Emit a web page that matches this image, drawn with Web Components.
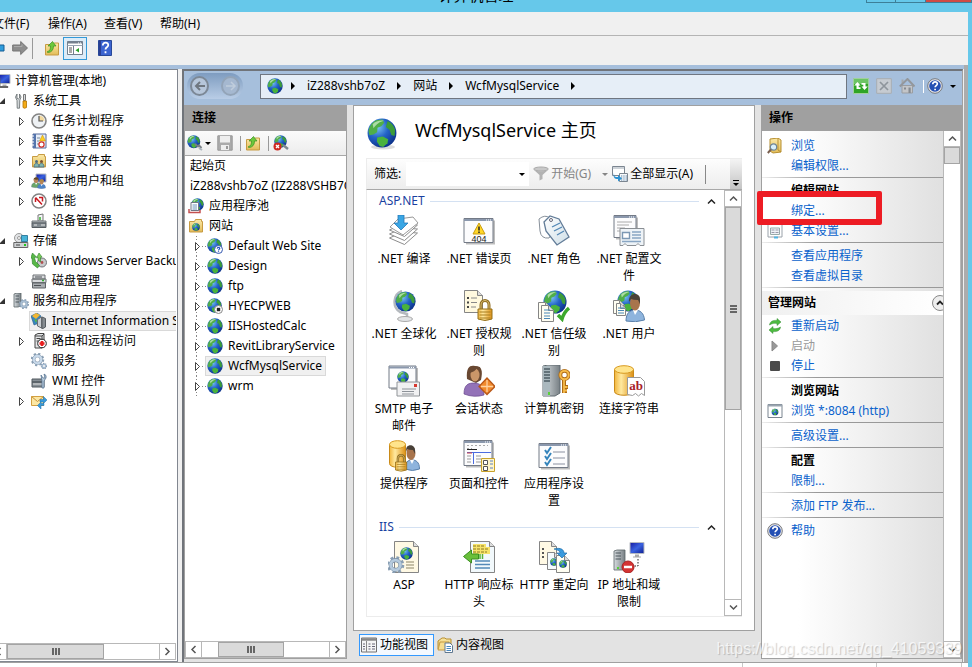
<!DOCTYPE html>
<html lang="zh-CN">
<head>
<meta charset="utf-8">
<title>计算机管理</title>
<style>
html,body{height:100%}
body{margin:0;overflow:hidden;font:12px/20px "Noto Sans","Noto Sans CJK SC",sans-serif;color:#000;background:#66c8ea}
</style>
</head>
<body>
<management-console></management-console>
<script>
const GRADS = `<defs>
<radialGradient id="gb" cx=".35" cy=".3" r=".8"><stop offset="0" stop-color="#7cc4f2"/><stop offset=".45" stop-color="#2464c8"/><stop offset="1" stop-color="#082a80"/></radialGradient>
<linearGradient id="gf" x2="0" y2="1"><stop offset="0" stop-color="#fbe9a8"/><stop offset="1" stop-color="#e2bc58"/></linearGradient>
<linearGradient id="gs" x2="1" y2="0"><stop offset="0" stop-color="#d8dde0"/><stop offset="1" stop-color="#777f84"/></linearGradient>
<linearGradient id="gy" x2="1" y2="0"><stop offset="0" stop-color="#f2b63c"/><stop offset=".35" stop-color="#ffe9a0"/><stop offset="1" stop-color="#dd9014"/></linearGradient>
<linearGradient id="gl" x2="1" y2="1"><stop offset="0" stop-color="#fff"/><stop offset="1" stop-color="#cfdfe8"/></linearGradient>
<linearGradient id="gm" x2="1" y2="1"><stop offset="0" stop-color="#1418a0"/><stop offset=".5" stop-color="#3a62e0"/><stop offset="1" stop-color="#0c1c90"/></linearGradient>
</defs>`;
const globe = (x, y, s) => `<g transform="translate(${x} ${y}) scale(${s / 16})"><circle cx="8" cy="8" r="7.7" fill="url(#gb)"/><path d="M.8 7C1.2 4.500 2.600 2.300 5 1.200L8.300.8 9.200 2.500 7.600 4.400 5.600 5.200 5.400 7.600 3.400 8.800 1.300 9.200z" fill="#4fae48"/><path d="M11 1.600c2 .8 3.400 2.600 4 4.600l-.3 3.400-1.700-.6-1-2.700-2-1.500z" fill="#3c9c3a"/><path d="M5.400 10.400l3-.6 2.900 1.500-.4 2.200-2.300 2-1.800-.6-1.500-2.200z" fill="#49b23d"/><path d="M3 3.300C4.500 1.600 7 1 9 1.400 7 1.900 5 3 3.500 5.500z" fill="#dff5d8" opacity=".65"/></g>`;
const page = (x, y, w, h, f = '#fffef2') => `<path d="M${x} ${y}h${w - 5}l5 5v${h - 5}h-${w}z" fill="${f}" stroke="#858585"/><path d="M${x + w - 5} ${y}v5h5" fill="#ddd" stroke="#858585"/>`;
const win = (x, y, w, h) => `<path d="M${x + 2} ${y + 2}h${w}v${h}h-${w}z" fill="#bdbdbd"/><path d="M${x} ${y}h${w}v${h}h-${w}z" fill="#fcfcfd" stroke="#737a86"/><path d="M${x} ${y + 1.500}h${w}" stroke="#8b98ad" stroke-width="2"/><path d="M${x + w - 7} ${y + 1.500}h6" stroke="#fff" stroke-dasharray="1 1"/>`;
const padlock = (x, y) => `<g transform="translate(${x} ${y})"><path d="M3.500 11V6c0-6 8-6 8 0v5" fill="none" stroke="#8f6c20" stroke-width="3"/><path d="M3.500 11V6c0-6 8-6 8 0v5" fill="none" stroke="#d8bc70"/><path d="M.5 10h14v10q-7 3-14 0z" fill="url(#gy)" stroke="#94701a"/><path d="M2 13h11M2 16h11M2 19h11" stroke="#a67c1e"/></g>`;
const person = (x, y, s, hair, body) => `<g transform="translate(${x} ${y}) scale(${s})"><path d="M1 20c0-7 4-9 9-9s9 2 9 9q-9 3-18 0z" fill="${body}" stroke="#5a6a8a" stroke-width=".6"/><path d="M8 11l2 5 3-5z" fill="#fff"/><ellipse cx="10" cy="6.500" rx="4.500" ry="5.500" fill="#b98558"/><path d="M5 7C4 0 15-2 15.500 5L15 8l-1-3q-5 1-8-1z" fill="${hair}"/></g>`;
const cyl = (x, y, w, h) => `<path d="M${x} ${y + 4}v${h - 8}c0 5 ${w} 5 ${w} 0v-${h - 8}z" fill="url(#gy)" stroke="#c98a18"/><ellipse cx="${x + w / 2}" cy="${y + 4}" rx="${w / 2}" ry="3.800" fill="#ffe48c" stroke="#d89a20"/>`;
const folder = `<path d="M1.500 3.500h5l1-2h6v2h1v10.500h-13z" fill="url(#gf)" stroke="#c79b42"/>`;
const helpDisc = `<circle cx="8" cy="8" r="7.300" fill="#e8e8ea" stroke="#77797e"/><circle cx="8" cy="8" r="5.800" fill="#2450b4"/><path d="M5.800 6.300c0-3.400 4.700-3 4.500-.3-.1 1.500-2.200 1.700-2.200 3.300M8.100 10.700v1.500" fill="none" stroke="#fff" stroke-width="1.700"/>`;
const server = (x, y, w, h) => `<path d="M${x} ${y + 1}l3-1h${w - 3}v${h - 1}l-3 1h-${w - 3}z" fill="url(#gs)" stroke="#5c6468" stroke-width=".8"/><path d="M${x + 1.500} ${y + 3}h${w / 2}M${x + 1.500} ${y + 6}h${w / 2}M${x + 1.500} ${y + 9}h${w / 2}" stroke="#4c565c"/>`;
const monitor = (x, y, w, h) => `<path d="M${x} ${y}h${w}v${h}h-${w}z" fill="url(#gm)" stroke="#b7bbc2"/><path d="M${x + w / 2 - 2} ${y + h + 1}h4v2h2v1h-8v-1h2z" fill="#aaa"/>`;
const gear = (cx, cy, r, f = '#a9bfd4') => `<circle cx="${cx}" cy="${cy}" r="${r}" fill="none" stroke="#8a9fb4" stroke-width="${r * .7}" stroke-dasharray="${r * .38} ${r * .405}"/><circle cx="${cx}" cy="${cy}" r="${r * .75}" fill="none" stroke="#7b90a6" stroke-width="${r * .62}"/><circle cx="${cx}" cy="${cy}" r="${r * .75}" fill="none" stroke="${f}" stroke-width="${r * .45}"/>`;

/* name: [view box size, drawing] */
const ICONS = {
  root: [16, monitor(4, 1.500, 11, 9) + server(0, 5, 5, 9) + `<path d="M5 14h8" stroke="#666" stroke-width="2"/>`],
  tools: [16, `<path d="M4 1v4l1.200 1L6.500 5V1q3 3 .3 6.200l-.3 8H4.200L4 7.500Q1 4 4 1z" fill="#d2d6d8" stroke="#62696c" stroke-width=".8"/><path d="M10.500 1.500h2v6h-2z" fill="#d8dcdf" stroke="#777"/><path d="M10 8h3.500v6.500q-2 1.500-3.500 0z" fill="#f4ac18" stroke="#b47400" stroke-width=".8"/>`],
  clock: [16, `<circle cx="8" cy="8" r="7" fill="#eef1f4" stroke="#848484" stroke-width="1.600"/><path d="M8 8h5.500A5.500 5.500 0 0 0 8 2.500z" fill="#f2d9a0"/><path d="M8 3v5h4" fill="none" stroke="#555" stroke-width="1.200"/>`],
  events: [16, `<path d="M2 1h13v14H2z" fill="#e8eef8" stroke="#586c9c"/><path d="M2 1h3v14H2z" fill="#5474ac"/><path d="M6 5h3M6 8h2M6 11h2" stroke="#789"/><path d="M11.500 2l3 6h-6z" fill="#ffcf20" stroke="#b88a00" stroke-width=".5"/><circle cx="10.500" cy="11.500" r="2.600" fill="#fff" stroke="#d03028" stroke-width="1.200"/><path d="M1 3h2M1 6h2M1 9h2M1 12h2" stroke="#fff"/>`],
  share: [16, folder + `<circle cx="5.500" cy="8.500" r="1.500" fill="#4a6a80"/><circle cx="10.500" cy="8.500" r="1.500" fill="#7a5030"/><path d="M3 14c0-5 5-5 5 0zM8 14c0-5 5-5 5 0z" fill="#7fb6ae" stroke="#578"/>`],
  users: [16, monitor(5, 1, 10, 8) + person(0, 4, .5, '#604828', '#6ba768') + person(6, 6, .45, '#b08840', '#4c84c8')],
  perf: [16, `<circle cx="8" cy="8" r="7" fill="#fff" stroke="#828282" stroke-width="1.500"/><path d="M4.500 4.500l6.500 7M4.500 9V5M8 4.500h3.500v4" fill="none" stroke="#c81820" stroke-width="1.500"/>`],
  devices: [16, `<path d="M7 2l5-1v7H7z" fill="#f4f6f8" stroke="#777"/><path d="M9 4v3" stroke="#3ab030" stroke-width="1.500"/><path d="M1 8h14v2H1z" fill="#b9bec2" stroke="#73797d"/><path d="M1 10h14v4.500H1z" fill="#828a90" stroke="#555b60"/><path d="M3 12h3M10 12h4" stroke="#e6e6e6"/>`],
  storage: [16, `<circle cx="6" cy="5" r="4.500" fill="#e2e4e6" stroke="#999"/><circle cx="6" cy="5" r="1.500" fill="#fff" stroke="#999"/><path d="M8.500 2.500h6v6h-6z" fill="#48b4d8" stroke="#3580a0"/><path d="M.8 9.500h14v5H.8z" fill="#cfd2d4" stroke="#666"/><path d="M3 12h4" stroke="#444"/><path d="M12 11v2" stroke="#20c820" stroke-width="2"/>`],
  backup: [16, `<circle cx="11" cy="9.500" r="4.500" fill="#c8cacc" stroke="#707478"/><circle cx="11" cy="9.500" r="1.400" fill="#b05050"/><path d="M1.500 0l4 4-2 .5 1 4 4 4-2 2.500-5-4L1 5-.5 5.500z" fill="#58b848" stroke="#2a8028" stroke-width=".6"/><path d="M8 0l3 4-1.500.5V9L7 7V4.500L5.500 5z" fill="#7aca58" stroke="#2a8028" stroke-width=".6"/>`],
  disk: [16, `<path d="M2 2h12v4H2zM1 6h14v3.500H1z" fill="#d8dadd" stroke="#6c7074"/><path d="M1.500 10h13v5h-13z" fill="#a8acb0" stroke="#606468"/><path d="M4 4h7M3 12.500h7" stroke="#4c5054"/><path d="M11 7.500h2" stroke="#30b030" stroke-width="1.500"/>`],
  services: [16, server(1, 0, 7, 14) + gear(11, 11, 3.800)],
  iis: [16, `<path d="M0 3l6-3 4 3-2 7-5 2z" fill="#3686c0" stroke="#285c88" stroke-width=".6"/><path d="M1 3l4-3 4 2-4 4z" fill="#f2b632"/><path d="M3 6l3 1-1 3z" fill="#58b848"/><path d="M6.500 6.500l4-2.500v11l-4-2z" fill="#caced2" stroke="#6c7074"/><path d="M11 4l3.500 1.500v8.500l-3.500 2z" fill="#868c90" stroke="#565c60"/>`],
  routing: [16, `<path d="M4 2l3-1.500h6V13l-2 2H4z" fill="#e4e6e8" stroke="#444"/><path d="M4 3h7v11M11 3l2-2M5.500 5.500h4M5.500 8h4" fill="none" stroke="#444"/><circle cx="11" cy="10.500" r="4.300" fill="#fff" stroke="#222"/><path d="M11 8v5M8.500 10.500h5" stroke="#e82020" stroke-width="2.600"/>`],
  gears: [16, gear(6.500, 6.500, 5, '#c8d9ea') + gear(13, 13, 2.400, '#a9c0d8')],
  wmi: [16, `<path d="M1 6h12v3H1zM1 9h12v5H1z" fill="#868e94" stroke="#50585e"/><path d="M2 11h9" stroke="#ddd"/><path d="M10 2l2 3h2l-1-4q3 1 2 4l-2 3v7h-2V8z" fill="#bccfdf" stroke="#567290" stroke-width=".8"/>`],
  queue: [16, `<path d="M.5 3.500h12v9H.5z" fill="#fce7a4" stroke="#d3a040"/><path d="M.5 3.500l6 5 6-5" fill="none" stroke="#c89438"/><path d="M9 6.500h3.500v-3L16 7l-3.500 3.500V9H9zM13 12.500h-3V16L6.500 12.500 10 9v1.500h3z" fill="#3a9ada" stroke="#1a70b0" stroke-width=".5"/>`],
  pool: [16, globe(3, 0, 13) + `<path d="M3 4.500h7.500v8H3z" fill="#fff" stroke="#6f7784"/><path d="M4.500 7h4.500M4.500 9h4.500M4.500 11h4.500" stroke="#6c94bc"/><path d="M1 11v3.500h11V12" fill="none" stroke="#c45050" stroke-width="1.500"/>`],
  sites: [16, folder + globe(4, 5, 8)],
  globe: [16, globe(0, 0, 16)],
  globeHelp: [16, globe(0, 0, 15) + `<circle cx="11.500" cy="11.500" r="4" fill="#fff" stroke="#3458b0"/><path d="M10.200 10.600c.2-1.800 2.700-1.500 2.500 0-.1.800-1.200.8-1.200 1.800M11.500 13.200v1" stroke="#2450c0" fill="none" stroke-width="1.200"/>`],
  globeStop: [16, globe(0, 0, 15) + `<circle cx="11.500" cy="11.500" r="4" fill="#fff" stroke="#888"/><path d="M9.800 9.800h3.400v3.400H9.800z" fill="#222"/>`],
  globeLink: [16, globe(0, 0, 13.500) + `<path d="M8 9l3 2.500 1-1 2.500 2.500" stroke="#777e84" stroke-width="2" fill="none"/><path d="M12 13l3 2" stroke="#aab4bc" stroke-width="2"/>`],
  globeDrop: [16, globe(1, 0, 13) + `<path d="M10 10l5 4" stroke="#7c8790" stroke-width="2.500"/><circle cx="4.500" cy="11.500" r="4" fill="#ce2820"/><path d="M3 10l3 3M6 10l-3 3" stroke="#fff" stroke-width="1.400"/>`],
  save: [16, `<path d="M.8.8h14.400v14.400H.8z" fill="#aaa" stroke="#999"/><path d="M3 1h10v6.500H3zM4 10h8v5H4z" fill="#eee"/><path d="M9 11h2v3H9z" fill="#999"/>`],
  folderUp: [16, `<path d="M1.500 4.500h7l2-1.500h4v12h-13z" fill="url(#gf)" stroke="#c79b42"/><path d="M3 12c3-1 3.500-3 3.500-6H4L8.500 1.500 12 6H9.500c0 4-2 6-5 6.500z" fill="#6cc83c" stroke="#3a9020" stroke-width=".7"/>`],
  back: [16, `<path d="M8 5h7v6H8v3L1 8l7-6z" fill="#2f9cdc" stroke="#155c94"/>`],
  forward: [16, `<path d="M.7 5h8V1.500L15.500 8l-6.800 6.500V11h-8z" fill="#8d8d8d" stroke="#747474"/><path d="M2 6.500h8V4.500" fill="none" stroke="#aaa"/>`],
  panes: [16, `<path d="M.5 1.500h15v13H.5z" fill="#fff" stroke="#73808f"/><path d="M.5 2.500h15" stroke="#73808f" stroke-width="2"/><path d="M.5 5.500h15" stroke="#9aa6b4"/><path d="M6.500 6v8" stroke="#73808f"/><path d="M2 8h3M2 10h3M2 12h3" stroke="#555"/><path d="M12 8v4.500L8.500 10.200z" fill="#28a028"/><path d="M11 3h4" stroke="#fff" stroke-dasharray="1 1"/>`],
  helpBook: [16, `<path d="M1.500.5h13v15h-13z" fill="#3c64d0" stroke="#284898"/><path d="M3 .5v15" stroke="#2a3f94" stroke-width="2"/><path d="M5.800 5.400c0-4 6-3.600 5.400 0-.3 2-2.700 1.900-2.700 4M8.500 11.200v2" fill="none" stroke="#fff" stroke-width="1.800"/>`],
  help: [16, helpDisc],
  refreshGo: [16, `<path d="M.5.5h15v15H.5z" fill="#2fa526" stroke="#a0cf9c"/><path d="M1 1h14v5H1z" fill="#6cc464"/><path d="M1.200 7.500L4.500 4l3 3.500H5.700v1.800h1.800v1.700H3.500V7.500zM14.800 8.500l-3.300 3.500-3-3.500h1.800V6.700H8.500V5h4v3.500z" fill="#fff"/>`],
  stopGray: [16, `<path d="M.7.700h14.600v14.600H.7z" fill="#c6cbd1" stroke="#a8adb2"/><path d="M4 4l8 8M12 4l-8 8" stroke="#8e959c" stroke-width="1.700"/>`],
  home: [16, `<path d="M2.500 1.500h2v4h-2z" fill="#a5a8ac"/><path d="M3 7.500h10.500V15H3z" fill="#c3c5c8" stroke="#9a9da1"/><path d="M.8 8.500L8.500 1l7 7.500" fill="none" stroke="#93979c" stroke-width="2"/><path d="M5 9.500h2v2H5zM9.500 9.500h2.200V15H9.500z" fill="#858a90"/>`],
  funnel: [16, `<ellipse cx="8" cy="3" rx="7.300" ry="2" fill="#c8c8c8" stroke="#aaa"/><path d="M1 4l5.500 5v5.500l3-1.500V9L15 4q-7 2.500-14 0z" fill="#b2b2b2"/>`],
  showAll: [16, `<path d="M.5.500h12v9H.5z" fill="#fff" stroke="#7b8590"/><path d="M.5 2h12" stroke="#9aa5b0"/><path d="M7.500 7.500h8v8h-8z" fill="#f6f8fa" stroke="#7b8590"/><path d="M9 10h6M9 12h6M9 14h6" stroke="#5d84a8" stroke-dasharray="1.300 1"/><path d="M2 7c0 4 1 4 4 4V9l4 3.500-4 3V13c-4 0-5-2-4-6z" fill="#2b92d4"/>`],
  browseFolder: [16, `<path d="M3 1l8-1 3 2v12l-8 1-3-2z" fill="url(#gf)" stroke="#b78f30"/><path d="M11 0v12l3 2" fill="none" stroke="#b78f30"/><circle cx="6.500" cy="9" r="3.200" fill="#d8effa" stroke="#6e8494" stroke-width="1.200"/><path d="M4 11.500L.8 15" stroke="#7a6050" stroke-width="2"/>`],
  settings: [16, `<path d="M1 1h14v13H1z" fill="#fff" stroke="#9aa2aa"/><path d="M3.500 5h9v6.500h-9z" fill="#eef2f6" stroke="#9aa"/><path d="M4.500 7h3M8.500 7h3M4.500 9.500h3M8.500 9.500h3" stroke="#99a"/><path d="M7 14.500h4" stroke="#50b4e4" stroke-width="2"/>`],
  restart: [16, `<path d="M2.500 7c.5-4 4-5 7.500-4.500V.5L14 4l-4 3.500v-2C7 5 5 5.500 2.500 7zM13.500 9c-.5 4-4 5-7.500 4.500v2L2 12l4-3.500v2c3 .5 5 0 7.500-1.500z" fill="#4dbb40" stroke="#348c30" stroke-width=".5"/>`],
  play: [16, `<path d="M5 3v10l5.500-5z" fill="#999" stroke="#888"/>`],
  stop: [16, `<rect x="3" y="3" width="10" height="10" rx="1" fill="#4a4a4a"/>`],
  browseSite: [16, `<path d="M1 1.500h14v13H1z" fill="#fff" stroke="#7b8590"/><path d="M1 2.500h14" stroke="#9aa5b0" stroke-width="2"/>` + globe(4.500, 5.500, 7)],
  featureView: [16, `<path d="M.5 1h15v14H.5z" fill="#f5f5f5" stroke="#707070"/><path d="M.5 2.500h15" stroke="#888" stroke-width="2.500"/><path d="M5.500 4v11" stroke="#888"/><path d="M2 7h2M2 9.500h2M2 12h2M7.500 7h2M7.500 9.500h2M7.500 12h2M11 7h3M11 9.500h3M11 12h3" stroke="#667"/>`],
  contentView: [16, `<path d="M1 4l4-3h3l1 1h5v10H1z" fill="url(#gf)" stroke="#b78f30"/><path d="M3 5h9l-2 8H1z" fill="#f7dd90" stroke="#c79b42"/><path d="M8 6h5l2.500 2.500V15.500H8z" fill="#fff" stroke="#607890"/><path d="M9.500 9.500H14M9.500 11.500H14M9.500 13.500H14" stroke="#4888c0"/>`],

  globeBig: [32, `<ellipse cx="17" cy="29" rx="12" ry="2.500" fill="#ddd"/>` + globe(1, 0, 30)],
  compile: [32, [23, 19, 15].map(y => `<path d="M1.500 ${y}l13-6 15 1-13 11.500z" fill="#fff" stroke="#8c8c8c"/>`).join('') + `<path d="M2 12l8-8 15-2 5 6-15 12z" fill="#fff" stroke="#999"/><path d="M10 0h6v8h4l-7 7-7-7h4z" fill="#3aa6e4" stroke="#2678b8" stroke-width=".8"/>`],
  err404: [32, win(1, 3.500, 29, 24) + `<path d="M16 8l6 11H10z" fill="#ffd728" stroke="#c99b10"/><path d="M16 11.500v4M16 16.500v1.500" stroke="#222" stroke-width="1.500"/><text x="16" y="26.500" font-family="Liberation Sans,sans-serif" font-size="9" text-anchor="middle" fill="#222">404</text>`],
  tags: [32, `<path d="M1 4q6-5 11-1l5 11-6 9q-8 1-9-7z" fill="#fff" stroke="#87909a"/><path d="M6 7l6-6 9 3 10 18-12 8L8 16z" fill="url(#gl)" stroke="#627c98" stroke-width="1.300"/><circle cx="13" cy="5" r="1.500" fill="#fff" stroke="#667"/><path d="M14 12l8-4M16 16l8-4M19 20l7-4" stroke="#5287b5" stroke-width="1.300"/>`],
  config: [32, win(1, .5, 22, 22) + `<path d="M4 7h15M4 10h12M4 13h8M4 16h6" stroke="#aaa"/><path d="M7 13.500h24v17h-4l-2-2-2 2h-9l-2-2-2 2H7z" fill="#eef3f7" stroke="#8a8f94"/><path d="M9.500 17.500h7v6h-7z" fill="#fff" stroke="#7c98b4" stroke-width="1.400"/><path d="M19 17h9M19 20h9M19 23h9M9 26.500h19" stroke="#89a6c4" stroke-width="1.300"/>`],
  worldStand: [32, `<path d="M14 1C5 4 4 17 12 22l7 2v4" fill="none" stroke="#b4b9be" stroke-width="2.500"/><ellipse cx="17" cy="29" rx="7.500" ry="2.500" fill="#e2e4e6" stroke="#aaa"/>` + globe(7, 1, 21)],
  authorize: [32, page(1.500, .5, 18, 22, '#fff9df') + `<path d="M4 8h2M4 12.500h2M4 17h2" stroke="#444" stroke-width="2"/><path d="M8 8h6M8 12.500h6M8 17h5" stroke="#888"/>` + padlock(14.500, 9)],
  trust: [32, globe(5, 0, 24) + page(.5, 12.500, 12, 16) + page(3.500, 15.500, 12, 16) + `<path d="M6 20h6M6 23h6M6 26h6M6 28.500h6" stroke="#4888b8"/><path d="M20 25l4 4q2-7 7-11" fill="none" stroke="#3ca82c" stroke-width="3.500"/>`],
  netUsers: [32, globe(4, 0, 22) + page(.5, 10.500, 11, 13) + page(3.500, 13.500, 9, 12) + `<path d="M5 18h6M5 20.500h6M5 23h6" stroke="#4888b8"/><path d="M13 31c0-8 4-11 9-11s9 3 9.500 10q-9 3-18.500 1z" fill="#8eb4dd" stroke="#5a80aa"/><path d="M20 20l2 5 3-5z" fill="#fff"/><ellipse cx="22" cy="13" rx="5" ry="7.500" fill="#a8744c"/><path d="M16 12C15 2 27 2 27 9v5l-2-4q-5 0-7-1z" fill="#4a4238"/>`],
  smtp: [32, win(1, 1, 27, 22) + globe(9, 6, 12) + `<path d="M9 17h22.500v14H9z" fill="#f1f1f2" stroke="#909498"/><path d="M14 24h14M14 26.500h12M14 29h12" stroke="#8d9298"/><path d="M26 19h3v3h-3z" fill="#d63830"/>`],
  session: [32, `<path d="M4 14C3 2 7 0 12 1c7 0 8 5 6 14l-5 3z" fill="#694832"/><path d="M1 29c0-10 5-11 10-11s10 2 10 12q-10 3-20-1z" fill="#9372b8" stroke="#68488c" stroke-width=".7"/><ellipse cx="12" cy="10" rx="4.500" ry="6.500" fill="#cb9669"/><path d="M6 8q6-1 8-5l4 5-1-6-7-1-4 3z" fill="#694832"/><path d="M24 13l8 8.500-8 8-8-8z" fill="#f18a2c" stroke="#b85818" stroke-width="1.300"/><path d="M24 15v12M18 21.500h12" stroke="#ffd2a0" stroke-width="1.300"/>`],
  machineKey: [32, `<path d="M5 1l5-1h12v28l-5 3H5z" fill="url(#gs)" stroke="#616b70"/><path d="M5 1h7v30H5z" fill="#aab8be"/><path d="M6 4h6M6 7h6M6 10h6M6 13h6M6 16h6" stroke="#4d5c64" stroke-width="1.500"/><path d="M11 27v3" stroke="#58d038" stroke-width="2"/><path d="M26 14v14M26 22h4M26 26h3" stroke="#ae6b16" stroke-width="4"/><circle cx="26.500" cy="10" r="4.200" fill="none" stroke="#b06e1a" stroke-width="3.800"/><circle cx="26.500" cy="10" r="4.200" fill="none" stroke="#f6bb4a" stroke-width="2"/><path d="M26 14v14M26 22h3.500M26 25.500h3" stroke="#f6bb4a" stroke-width="1.800"/>`],
  connStr: [32, cyl(1.500, .5, 19, 30) + `<path d="M14.500 12.500h13l4 4v14l-3-2-3 2.500-3-2.500-3 2-5-1z" fill="#fff" stroke="#999"/><text x="23" y="25" font-family="Liberation Serif,serif" font-weight="bold" font-size="13" text-anchor="middle" fill="#a82028">ab</text>`],
  provider: [32, cyl(1.500, .5, 16, 27) + `<path d="M17 29c0-7 3-9 7-9s7.500 2 7.500 9q-7 3-14.500 0z" fill="#8eb4dd" stroke="#5a80aa"/><path d="M22 20l2 4 2-4z" fill="#fff"/><ellipse cx="23" cy="13" rx="4.500" ry="7" fill="#a8744c"/><path d="M18 12c-1-9 9-8 9-2v4l-2-4q-4 0-6-1z" fill="#484038"/><g transform="translate(1.500 6) scale(.8)">` + padlock(7, 10) + `</g>`],
  controls: [32, win(1, .5, 28, 25) + `<path d="M4 5.500h21M4 8.500h5" stroke="#aaa" stroke-dasharray="2 2"/><path d="M4 9.500h10" stroke="#222"/><path d="M4 12.500h24M10.500 12v12" stroke="#4c6ce0"/><path d="M4 13h5" stroke="#d04040"/><path d="M4 16h4M4 19h4M4 22h4M13 16h5M13 19h5M13 22h5" stroke="#999"/><path d="M18.500 18.500h13v13h-13z" fill="#fff5c8" stroke="#c8a22c"/><path d="M20.500 20.500h4v4h-4zM20.500 26.500h4v4h-4z" fill="#fff" stroke="#555"/><path d="M27 21h3M27 24h3M27 28h3" stroke="#5a80c8"/>`],
  appSettings: [32, win(1, 3.500, 29, 24) + `<path d="M15 12h12M15 18h12M15 24h12" stroke="#8a90a0"/><path d="M7 10l2 3 4-6M7 16l2 3 4-6M7 22l2 3 4-6" fill="none" stroke="#3484bc" stroke-width="2"/>`],
  asp: [32, page(6.500, .5, 24, 31, '#fff9e4') + globe(12, 6, 13) + `<path d="M18 21h8M18 24h8M18 27h8" stroke="#8d8567"/>` + gear(7.500, 24, 6.500, '#b5cadd')],
  headers: [32, page(7.500, .5, 24, 31, '#f2f9fc') + `<path d="M10 3h13v3h4v7H10z" fill="#f7e36a"/><path d="M10 5h12M10 8h16M10 11h14" stroke="#8c7a20" stroke-dasharray="3 1"/><path d="M.5 15.500l8-6.500v4h7v5h-7v4z" fill="#69bf3a" stroke="#3a8f20"/><path d="M17 13v5M19.500 13v5" stroke="#5bb338" stroke-width="1.500"/><path d="M12 20h15M12 23.500h15M12 27h15" stroke="#548ab8" stroke-width="1.500"/>`],
  redirect: [32, page(1.500, .5, 17, 23, '#fff9e4') + `<path d="M4 8h2M4 12h2M4 16h2" stroke="#555" stroke-width="2"/>` + page(9.500, 11.500, 12, 17, '#f5fafc') + globe(12, 17, 8) + page(18.500, 14.500, 13, 17) + globe(21, 19, 8) + `<path d="M16 8c7-2 10 1 10 4h3l-5 5-5-5h3c0-2-2-3-6-4z" fill="#3a9ade" stroke="#226ea8" stroke-width=".7"/>`],
  ipLimit: [32, server(1, 9, 11, 20) + `<path d="M5 26v2" stroke="#58d038" stroke-width="2"/>` + monitor(17, 1.500, 14, 11) + `<path d="M25 18v7h-5" fill="none" stroke="#222" stroke-dasharray="1.500 1.500"/><circle cx="15" cy="26" r="6" fill="#d43434" stroke="#a22"/><path d="M11 26h8" stroke="#fff" stroke-width="2.500"/>`],
  peekBlue: [32, `<rect x="8" width="16" height="14" rx="2" fill="#a3b5c4"/>`],
  peekPage: [32, page(1.500, .5, 15, 20)],
  peekLock: [32, `<rect x="8" width="8" height="9" fill="#9a7828"/>`]
};

function define(name, html, setup) {
  const t = document.createElement('template');
  t.innerHTML = html;
  customElements.define(name, class extends HTMLElement {
    connectedCallback() {
      if (this.shadowRoot) return;
      this.attachShadow({mode: 'open'}).append(t.content.cloneNode(true));
      if (setup) setup(this, this.shadowRoot);
    }
  });
}

define('ui-icon', `<style>:host{display:block;flex:none;width:16px;height:16px}:host([large]){width:32px;height:32px}svg{display:block;width:100%;height:100%}</style>`, (el, root) => {
  const [size, art] = ICONS[el.getAttribute('name')];
  root.innerHTML += `<svg viewBox="0 0 ${size} ${size}" aria-hidden="true">${GRADS}${art}</svg>`;
});

define('scroll-bar', `<style>
:host{display:flex;flex:none;box-sizing:border-box;height:17px;background:#fff;border:1px solid #b8b8b8}
:host([vertical]){flex-direction:column;height:auto;width:18px}
button{flex:none;width:16px;height:100%;padding:0;border:0;border-right:1px solid #b8b8b8;background:#fff;display:grid;place-items:center}
button.end{border-right:0;border-left:1px solid #b8b8b8}
:host([vertical]) button{width:100%;height:16px;border:0;border-bottom:1px solid #b8b8b8}
:host([vertical]) button.end{border:0;border-top:1px solid #b8b8b8}
.track{flex:1;display:flex;min-width:0;min-height:0;padding-left:var(--lead,0)}
:host([vertical]) .track{flex-direction:column;padding:var(--lead,0) 0 0}
.thumb{flex:none;width:var(--size);background:#dadada;outline:1px solid #a4a4a4;outline-offset:-1px;display:grid;place-items:center}
:host([vertical]) .thumb{width:auto;height:var(--size)}
.grip{width:8px;height:7px;background:repeating-linear-gradient(90deg,#666 0 2px,transparent 2px 3px)}
:host([vertical]) .grip{width:7px;height:8px;background:repeating-linear-gradient(#666 0 2px,transparent 2px 3px)}
:host([plain]) .grip{display:none}
svg{display:block;width:9px;height:9px}
:host([vertical]) svg{transform:rotate(90deg)}
</style>
<button aria-label="向前滚动"><svg viewBox="0 0 9 9"><path d="M6.500 1L3 4.500 6.500 8" fill="none" stroke="#555" stroke-width="1.500"/></svg></button>
<div class="track"><div class="thumb"><div class="grip"></div></div></div>
<button class="end" aria-label="向后滚动"><svg viewBox="0 0 9 9"><path d="M2.500 1L6 4.500 2.500 8" fill="none" stroke="#555" stroke-width="1.500"/></svg></button>`);

define('tree-node', `<style>
:host{display:flex;height:20px;align-items:center;white-space:nowrap;margin-left:var(--indent,0)}
.exp{flex:none;width:16px;height:20px}
.exp svg{display:block}
.hit{display:flex;align-items:center;gap:var(--gap,4px);box-sizing:border-box;height:20px;padding:0 3px 0 1px;margin-left:-2px;border:1px solid transparent}
:host([selected]) .hit{background:#f0f0f0;border-color:#d9d9d9}
:host([fill]) .hit{flex:1}
</style><div class="exp"></div><div class="hit"><slot></slot></div>`, (el, root) => {
  el.setAttribute('role', 'treeitem');
  const exp = root.querySelector('.exp'), kind = el.getAttribute('expander');
  if (kind === null) exp.remove();
  if (kind === 'closed' || kind === 'site') exp.innerHTML = `<svg width="16" height="20"><path d="M4.500 6.500v8l4-4z" fill="#fff" stroke="#444"/>${kind === 'site' ? '<path d="M5.500 0v6M5.500 16v4M11 10.500h4" stroke="#888" stroke-dasharray="1 2"/>' : ''}</svg>`;
  if (kind === 'open') exp.innerHTML = `<svg width="16" height="20"><path d="M8 7v6H2z" fill="#333"/></svg>`;
  const name = el.getAttribute('icon');
  if (name) { const i = document.createElement('ui-icon'); i.setAttribute('name', name); root.querySelector('.hit').prepend(i); }
});

define('title-bar', `<style>:host{display:flex;justify-content:center;height:12px;background:#66c8ea;position:relative;overflow:hidden}
h1{margin:-17px 0 0;padding-right:20px;font-size:15px;line-height:24px;font-weight:400;height:24px}
.caps{position:absolute;right:0;top:-18px;display:flex}
button{width:30px;height:21px;padding:0;border:1px solid #3d7f98;background:transparent}
button+button{border-left:0}button.close{width:46px;background:#cf4b46}
</style><h1>计算机管理</h1><div class="caps"><button aria-label="最小化"></button><button aria-label="最大化"></button><button class="close" aria-label="关闭"></button></div>`);

define('menu-bar', `<style>:host{display:flex;gap:16px;height:23px;background:#f0f0f0;border-bottom:1px solid #b4b4b4;overflow:hidden}
button{flex:none;font:inherit;color:inherit;line-height:22px;min-width:40px;margin:0;padding:0;border:0;background:none;white-space:nowrap;text-align:left}
button:first-of-type{margin-left:-8px}
</style><button>文件(F)</button><button>操作(A)</button><button>查看(V)</button><button>帮助(H)</button>`);

define('tool-bar', `<style>:host{display:flex;height:29px;background:#f0f0f0;overflow:hidden}
.row{display:flex;height:24px;align-items:center}
button{display:grid;place-items:center;box-sizing:border-box;width:23px;height:23px;padding:0;border:1px solid transparent;background:none}
button[aria-pressed=true]{border-color:#3399d8;background:#dcecf8;width:24px}
.back{margin-left:-15px}.sep{width:1px;height:21px;background:#999;margin:0 7px 0 1px}.help{margin-left:6px}
</style><div class="row"><button class="back" aria-label="后退"><ui-icon name="back"></ui-icon></button><button aria-label="前进"><ui-icon name="forward"></ui-icon></button><span class="sep"></span><button aria-label="上移"><ui-icon name="folderUp"></ui-icon></button><button aria-label="显示窗格" aria-pressed="true"><ui-icon name="panes"></ui-icon></button><button class="help" aria-label="帮助"><ui-icon name="helpBook"></ui-icon></button></div>`);

define('console-tree', `<style>:host{display:flex;flex-direction:column;min-width:0;overflow:hidden;box-sizing:border-box;background:#fff;border-top:1px solid #828790;border-right:1px solid #828790;border-bottom:1px solid #828790}
.tree{flex:1;overflow:hidden;padding-top:1px;margin-right:1px}
.l0{--indent:-5px}.l1{--indent:-3px}.l2{--indent:15px;--gap:5px}
scroll-bar{margin:0 1px 1px -10px;--size:97px}
</style><div class="tree" role="tree" aria-label="计算机管理">
<tree-node class="l0" icon="root">计算机管理(本地)</tree-node>
<tree-node class="l1" expander="open" icon="tools">系统工具</tree-node>
<tree-node class="l2" expander="closed" icon="clock">任务计划程序</tree-node>
<tree-node class="l2" expander="closed" icon="events">事件查看器</tree-node>
<tree-node class="l2" expander="closed" icon="share">共享文件夹</tree-node>
<tree-node class="l2" expander="closed" icon="users">本地用户和组</tree-node>
<tree-node class="l2" expander="closed" icon="perf">性能</tree-node>
<tree-node class="l2" expander="none" icon="devices">设备管理器</tree-node>
<tree-node class="l1" expander="open" icon="storage">存储</tree-node>
<tree-node class="l2" expander="closed" icon="backup">Windows Server Backup</tree-node>
<tree-node class="l2" expander="none" icon="disk">磁盘管理</tree-node>
<tree-node class="l1" expander="open" icon="services">服务和应用程序</tree-node>
<tree-node class="l2" expander="none" icon="iis" selected fill>Internet Information Services</tree-node>
<tree-node class="l2" expander="closed" icon="routing">路由和远程访问</tree-node>
<tree-node class="l2" expander="none" icon="gears">服务</tree-node>
<tree-node class="l2" expander="none" icon="wmi">WMI 控件</tree-node>
<tree-node class="l2" expander="closed" icon="queue">消息队列</tree-node>
</div><scroll-bar></scroll-bar>`);

define('address-bar', `<style>:host{display:flex;align-items:center;height:34px;background:#a6bfdc;box-sizing:border-box;padding:0 6px 4px 3px}
.nav{display:flex;gap:12px;align-items:center;box-sizing:border-box;width:56px;height:26px;padding:0 3px;border-radius:13px;background:linear-gradient(#7e9cc0,#b9cde6);margin-right:17px}
.nav button{width:20px;height:20px;box-sizing:border-box;border:2px solid #7c8896;border-radius:50%;padding:0;background:#b6c6da;display:grid;place-items:center;color:#6f7780}
.nav button+button{border-color:#93a4b8;color:#c0cddc;background:#a5b8d0}
nav{flex:1;display:flex;align-items:center;gap:12px;height:23px;padding:0 6px;border:1px solid #6f7681;background:#e6eef7;min-width:0}
nav ui-icon{margin-right:-4px}
nav button,.cmds button{font:inherit;color:inherit;border:0;background:none;padding:0;display:flex;align-items:center}
i{flex:none;width:0;height:0;border:4px solid transparent;border-left-color:#000;border-right:0}
.cmds{display:flex;align-items:center;gap:7px;margin-left:6px}
.sep{width:1px;height:13px;background:#fff;margin-left:1px}
b{width:0;height:0;border:3px solid transparent;border-top-color:#000;border-bottom:0;margin-left:7px}
.sep+button{margin-left:-4px}
</style><div class="nav"><button aria-label="后退" disabled><svg width="12" height="12"><path d="M11 6H2M6 2L2 6l4 4" fill="none" stroke="currentColor" stroke-width="2"/></svg></button><button aria-label="前进" disabled><svg width="12" height="12"><path d="M1 6h9M6 2l4 4-4 4" fill="none" stroke="currentColor" stroke-width="1.500"/></svg></button></div>
<nav aria-label="路径"><ui-icon name="globe"></ui-icon><i></i><button>iZ288vshb7oZ</button><i></i><button>网站</button><i></i><button>WcfMysqlService</button><i></i></nav>
<div class="cmds"><button aria-label="刷新"><ui-icon name="refreshGo"></ui-icon></button><button aria-label="停止" disabled><ui-icon name="stopGray"></ui-icon></button><button aria-label="主页"><ui-icon name="home"></ui-icon></button><span class="sep"></span><button aria-label="帮助"><ui-icon name="help"></ui-icon><b></b></button></div>`);

define('panel-header', `<style>:host{display:block;background:#a0a0a0;height:26px;line-height:26px;padding-left:7px;font-weight:700}</style><slot></slot>`);

define('connections-panel', `<style>:host{display:flex;flex-direction:column;min-width:0;overflow:hidden;background:#fff;border:1px solid #a0a0a0;border-top:0;margin-bottom:3px}
.bar{display:flex;align-items:center;height:24px;padding:0 2px;background:linear-gradient(#fbfbfb,#ececec);border-bottom:1px solid #a8a8a8}
button{border:0;background:none;padding:0;display:flex;align-items:center}
i{border:3px solid transparent;border-top-color:#000;border-bottom:0;margin:0 6px 0 2px}
.sep{width:1px;height:15px;background:#999;margin:0 4px 0 7px}
.tree{flex:1;overflow:hidden}
.home{--indent:5px}.l1{--indent:3px;--gap:5px}.l2{--indent:6px;--gap:5px}
scroll-bar{--lead:16px;--size:66px}
</style><panel-header>连接</panel-header>
<div class="bar"><button aria-label="连接"><ui-icon name="globeLink"></ui-icon><i></i></button><button aria-label="保存" disabled><ui-icon name="save"></ui-icon></button><span class="sep"></span><button aria-label="上移"><ui-icon name="folderUp"></ui-icon></button><span class="sep"></span><button aria-label="断开"><ui-icon name="globeDrop"></ui-icon></button></div>
<div class="tree" role="tree" aria-label="连接">
<tree-node class="home">起始页</tree-node>
<tree-node class="home">iZ288vshb7oZ (IZ288VSHB7OZ)</tree-node>
<tree-node class="l1" icon="pool">应用程序池</tree-node>
<tree-node class="l1" icon="sites">网站</tree-node>
<tree-node class="l2" expander="site" icon="globeHelp">Default Web Site</tree-node>
<tree-node class="l2" expander="site" icon="globe">Design</tree-node>
<tree-node class="l2" expander="site" icon="globe">ftp</tree-node>
<tree-node class="l2" expander="site" icon="globeStop">HYECPWEB</tree-node>
<tree-node class="l2" expander="site" icon="globe">IISHostedCalc</tree-node>
<tree-node class="l2" expander="site" icon="globe">RevitLibraryService</tree-node>
<tree-node class="l2" expander="site" icon="globe" selected>WcfMysqlService</tree-node>
<tree-node class="l2" expander="site" icon="globe">wrm</tree-node>
</div><scroll-bar></scroll-bar>`);

define('feature-group', `<style>:host{display:block}
header{display:flex;align-items:center;height:20px;padding:1px 8px 0 12px;gap:5px}
h3{margin:0;font-size:12px;font-weight:400;color:#1a3fa0}
.line{flex:1;height:1px;background:#d4e1f2}
button{padding:0;border:0;background:none;margin-left:3px;display:flex}
.grid{display:grid;grid-template-columns:repeat(auto-fill,75px);padding:4px 40px 1px 0}
</style><header><h3></h3><div class="line"></div><button aria-label="折叠"><svg width="9" height="9"><path d="M1 6.500L4.500 3 8 6.500" fill="none" stroke="#222" stroke-width="1.500"/></svg></button></header><div class="grid"><slot></slot></div>`, (el, root) => {
  root.querySelector('h3').textContent = el.getAttribute('heading');
});

define('feature-tile', `<style>:host{display:flex;flex-direction:column;align-items:center;gap:3px;height:75px;padding-right:1px}
.label{width:70px;line-height:17px;text-align:center}</style><div class="art"></div><div class="label"><slot></slot></div>`, (el, root) => {
  const i = document.createElement('ui-icon');
  i.setAttribute('name', el.getAttribute('icon')); i.setAttribute('large', '');
  root.querySelector('.art').append(i);
});

define('filter-bar', `<style>:host{display:flex;align-items:center;height:30px;background:linear-gradient(#fdfdfd,#ededed);border-top:1px solid #ececec;border-bottom:1px solid #a8a8a8;border-left:1px solid #ececec}
label{padding:0 5px 0 7px}
.combo{flex:1;display:flex;align-items:center;background:#fff;height:24px;min-width:40px}
input{flex:1;min-width:0;width:20px;border:0;background:none;font:inherit;outline:0}
button{display:flex;align-items:center;gap:2px;font:inherit;color:inherit;border:0;background:none;padding:0;white-space:nowrap}
i{border:3px solid transparent;border-top-color:currentColor;border-bottom:0;margin:0 4px 0 3px}
.go{color:#858585;margin-left:4px}.go i{margin:0 4px 0 9px}
.sep{width:1px;height:19px;background:#888;margin:0 24px 0 12px}
.more{align-self:stretch;width:12px;background:linear-gradient(#f4f4f4,#c4c4c4);align-items:flex-end;justify-content:center;padding-bottom:2px}
</style><label for="q">筛选:</label><div class="combo"><input id="q"><button aria-label="展开筛选"><i></i></button></div>
<button class="go" disabled><ui-icon name="funnel"></ui-icon>开始(G)<i></i></button><button><ui-icon name="showAll"></ui-icon>全部显示(A)</button><span class="sep"></span><button class="more" aria-label="更多"><svg width="8" height="8"><path d="M1 1.500h6" stroke="#000"/><path d="M1 4h6L4 7z"/></svg></button>`);

define('feature-panel', `<style>:host{display:flex;flex-direction:column;min-width:0;min-height:0}
main{flex:1;display:flex;flex-direction:column;min-height:0;background:#fff;border:1px solid #a0a0a0;padding:0 12px 13px}
.title{display:flex;gap:17px;height:52px}
.title ui-icon{margin-top:12px}
h2{margin:0;font-size:18px;font-weight:400;line-height:49px;white-space:nowrap}
.list{flex:1;display:flex;min-height:0;border-left:1px solid #ececec;border-bottom:1px solid #ececec}
.scroll{flex:1;overflow:hidden;min-width:0}
scroll-bar{--size:203px}
.tabs{display:flex;gap:1px;padding:3px 6px 6px}
.tabs button{font:inherit;color:inherit;display:flex;align-items:center;gap:3px;height:22px;padding:0 5px 0 1px;border:1px solid transparent;background:none}
.tabs button[aria-selected=true]{border-color:#3399ff;background:#f4f9ff}
</style><main><div class="title"><ui-icon name="globeBig" large></ui-icon><h2>WcfMysqlService 主页</h2></div><filter-bar></filter-bar>
<div class="list"><div class="scroll">
<feature-group heading="ASP.NET">
<feature-tile icon="compile">.NET 编译</feature-tile><feature-tile icon="err404">.NET 错误页</feature-tile><feature-tile icon="tags">.NET 角色</feature-tile><feature-tile icon="config">.NET 配置文件</feature-tile>
<feature-tile icon="worldStand">.NET 全球化</feature-tile><feature-tile icon="authorize">.NET 授权规则</feature-tile><feature-tile icon="trust">.NET 信任级别</feature-tile><feature-tile icon="netUsers">.NET 用户</feature-tile>
<feature-tile icon="smtp">SMTP 电子邮件</feature-tile><feature-tile icon="session">会话状态</feature-tile><feature-tile icon="machineKey">计算机密钥</feature-tile><feature-tile icon="connStr">连接字符串</feature-tile>
<feature-tile icon="provider">提供程序</feature-tile><feature-tile icon="controls">页面和控件</feature-tile><feature-tile icon="appSettings">应用程序设置</feature-tile>
</feature-group>
<feature-group heading="IIS">
<feature-tile icon="asp">ASP</feature-tile><feature-tile icon="headers">HTTP 响应标头</feature-tile><feature-tile icon="redirect">HTTP 重定向</feature-tile><feature-tile icon="ipLimit">IP 地址和域限制</feature-tile>
<feature-tile icon="peekBlue"></feature-tile><feature-tile icon="peekPage"></feature-tile><feature-tile icon="peekLock"></feature-tile>
</feature-group></div><scroll-bar vertical></scroll-bar></div></main>
<div class="tabs" role="tablist"><button role="tab" aria-selected="true"><ui-icon name="featureView"></ui-icon>功能视图</button><button role="tab" aria-selected="false"><ui-icon name="contentView"></ui-icon>内容视图</button></div>`);

define('action-link', `<style>:host{display:flex;height:20px;align-items:center;padding-left:5px}
.slot{width:16px;margin-right:8px}a,button{color:#0a62cc;text-decoration:none;white-space:nowrap}
button{font:inherit;border:0;padding:0;background:none;color:#999}
</style><span class="slot"></span>`, (el, root) => {
  const name = el.getAttribute('icon');
  if (name) root.querySelector('.slot').innerHTML = `<ui-icon name="${name}"></ui-icon>`;
  const c = document.createElement(el.hasAttribute('disabled') ? 'button' : 'a');
  if (c.tagName === 'A') c.href = '#'; else c.disabled = true;
  c.append(document.createElement('slot'));
  root.append(c);
});

define('actions-panel', `<style>:host{display:flex;flex-direction:column;min-width:0;min-height:0;border:1px solid #a0a0a0;border-top:0;margin-bottom:3px;position:relative}
.body{flex:1;display:flex;min-height:0}
.list{flex:1;overflow:hidden;padding-top:5px;background:linear-gradient(90deg,#fff 20%,#e0e0e0)}
h4{margin:0;font-size:12px;height:20px;padding-left:29px}
hr{border:0;height:1px;margin:1px 0 3px;background:linear-gradient(90deg,#eee,#999 30%)}
.section{display:flex;justify-content:space-between;align-items:center;height:24px;margin-bottom:1px;padding-left:6px;background:linear-gradient(90deg,#f0f0f0,#fff);font-weight:700}
.section button{flex:none;width:16px;height:16px;box-sizing:border-box;padding:0;border:1px solid #888;border-radius:50%;background:#eee;margin-right:-5px;display:grid;place-items:center}
scroll-bar{--size:17px;border-top:0}
.mark{position:absolute;left:-5px;top:86px;width:113px;height:22px;border:6px solid #ed1c24;border-radius:2px}
</style><panel-header>操作</panel-header><div class="body"><div class="list">
<action-link icon="browseFolder">浏览</action-link><action-link>编辑权限...</action-link><hr>
<h4>编辑网站</h4><action-link>绑定...</action-link><action-link icon="settings">基本设置...</action-link><hr>
<action-link>查看应用程序</action-link><action-link>查看虚拟目录</action-link><hr>
<div class="section">管理网站<button aria-label="折叠"><svg width="8" height="8"><path d="M1 5.500L4 2.500 7 5.500" fill="none" stroke="#222" stroke-width="1.800"/></svg></button></div>
<action-link icon="restart">重新启动</action-link><action-link icon="play" disabled>启动</action-link><action-link icon="stop">停止</action-link><hr>
<h4>浏览网站</h4><action-link icon="browseSite">浏览 *:8084 (http)</action-link><hr>
<action-link>高级设置...</action-link><hr><h4>配置</h4><action-link>限制...</action-link><hr>
<action-link>添加 FTP 发布...</action-link><hr><action-link icon="help">帮助</action-link>
</div><scroll-bar vertical plain></scroll-bar></div><div class="mark"></div>`);

define('status-strip', `<style>:host{display:grid;grid-template-columns:1fr 134px 85px 6px;height:4px;background:#fff;border-top:1px solid #a0a0a0}i{border-right:1px solid #c8c8c8}i:last-child{border:0}</style><i></i><i></i><i></i><i></i>`);

define('management-console', `<style>
:host{display:flex;flex-direction:column;height:100vh;position:relative}
.frame{flex:1;display:flex;flex-direction:column;min-height:0;margin-right:4px;background:#f0f0f0}
.work{flex:1;display:grid;grid-template-columns:178px minmax(0,1fr);gap:4px;min-height:0;padding-top:4px;border-right:4px solid #acacac;background:linear-gradient(#a6bfdc 4px,#f0f0f0 4px)}
.iis{display:flex;flex-direction:column;min-height:0;border:1px solid #70747a;border-width:2px 1px 0 2px;border-right-color:#a0a0a0;background:#e3e3e3;margin-right:1px}
.cols{flex:1;display:grid;grid-template-columns:163px minmax(0,1fr) 201px;gap:6px;min-height:0}
.water{position:absolute;right:10px;bottom:8px;font:16px/20px "Liberation Sans",sans-serif;color:rgba(255,255,255,.75);text-shadow:1px 1px 1px rgba(0,0,0,.2);pointer-events:none}
</style><title-bar></title-bar><div class="frame"><menu-bar></menu-bar><tool-bar></tool-bar>
<div class="work"><console-tree></console-tree><div class="iis"><address-bar></address-bar><div class="cols"><connections-panel></connections-panel><feature-panel></feature-panel><actions-panel></actions-panel></div></div></div>
<status-strip></status-strip></div><div class="water">https://blog.csdn.net/qq_41059339</div>`);
</script>
</body>
</html>
